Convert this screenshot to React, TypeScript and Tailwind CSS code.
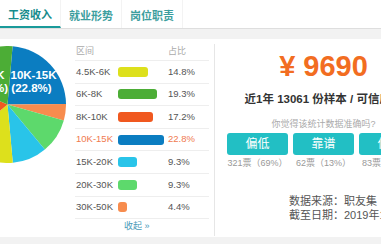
import React from 'react'

interface Row {
  range: string
  pct: number
  color: string
  hot?: boolean
}

const rows: Row[] = [
  { range: '4.5K-6K', pct: 14.8, color: '#dde01c' },
  { range: '6K-8K', pct: 19.3, color: '#4cad36' },
  { range: '8K-10K', pct: 17.2, color: '#f0581f' },
  { range: '10K-15K', pct: 22.8, color: '#0b7dc1', hot: true },
  { range: '15K-20K', pct: 9.3, color: '#29c4e9' },
  { range: '20K-30K', pct: 9.3, color: '#5dd96c' },
  { range: '30K-50K', pct: 4.4, color: '#f78c4e' },
]

// 饼图扇区：中心 (7.5, 58.5)，半径 58.5，页面左侧被裁掉
const slices = [
  { color: '#0b7dc1', d: 'M7.5 58.5 L12.6 0.22 A58.5 58.5 0 0 1 66 57.99 Z' },
  { color: '#f78c4e', d: 'M7.5 58.5 L66 57.99 A58.5 58.5 0 0 1 63.79 74.43 Z' },
  { color: '#5dd96c', d: 'M7.5 58.5 L63.79 74.43 A58.5 58.5 0 0 1 44.87 103.51 Z' },
  { color: '#29c4e9', d: 'M7.5 58.5 L44.87 103.51 A58.5 58.5 0 0 1 12.8 116.76 Z' },
  { color: '#dde01c', d: 'M7.5 58.5 L12.8 116.76 A58.5 58.5 0 0 1 -37.12 96.34 Z' },
  { color: '#f0581f', d: 'M7.5 58.5 L-37.12 96.34 A58.5 58.5 0 0 1 -46.15 35.18 Z' },
  { color: '#4cad36', d: 'M7.5 58.5 L-46.15 35.18 A58.5 58.5 0 0 1 12.6 0.22 Z' },
]

const tabs = ['工资收入', '就业形势', '岗位职责']

const votes = [
  { label: '偏低', count: '321票（69%）' },
  { label: '靠谱', count: '62票（13%）' },
  { label: '偏高', count: '83票（18%）' },
]

function Pie() {
  return (
    <svg width={66} height={117} className="shrink-0 mt-[7px]" style={{ overflow: 'hidden' }}>
      {slices.map((s, i) => (
        <path key={i} d={s.d} fill={s.color} />
      ))}
      <g fill="#fff" fontWeight="bold" fontSize="11.5" fontFamily="'Liberation Sans', sans-serif" textAnchor="middle">
        <text x={33.5} y={33}>10K-15K</text>
        <text x={31.5} y={46}>(22.8%)</text>
        <text x={-12} y={33}>6K-8K</text>
        <text x={-12} y={46}>(19.3%)</text>
      </g>
    </svg>
  )
}

export default function App() {
  return (
    <div
      className="w-[381px] h-[244px] overflow-hidden bg-[#f2f2f2]"
      style={{ fontFamily: "'Liberation Sans', 'Noto Sans CJK SC', sans-serif" }}
    >
      {/* 标签栏 */}
      <div className="flex h-[29px] bg-white border-b border-[#dedede]">
        {tabs.map((t, i) => (
          <div
            key={t}
            className={`w-[61px] shrink-0 flex items-center justify-center pt-1 text-[11px] font-bold border-r border-[#f3f3f3] ${
              i === 0 ? 'text-[#178c8c] border-b-2 border-b-[#1a9a9a]' : 'text-[#3c9e9e]'
            }`}
          >
            {t}
          </div>
        ))}
      </div>

      {/* 内容 */}
      <div className="mt-[10px] flex h-[198px] bg-white">
        <Pie />

        {/* 表格 */}
        <div className="ml-[9px] mt-[5px] w-[134px] shrink-0">
          <div className="flex h-[17px] items-center border-b border-[#eeeeee] text-[9px] text-[#aaaaaa]">
            <span className="w-[93px] pl-px">区间</span>
            <span>占比</span>
          </div>
          {rows.map((r) => (
            <div
              key={r.range}
              className={`flex h-[22.6px] items-center border-b border-[#eeeeee] text-[9.5px] ${
                r.hot ? 'text-[#f07a4f]' : 'text-[#555555]'
              }`}
            >
              <span className="w-[43px] pl-px">{r.range}</span>
              <span className="w-[50px]">
                <span
                  className="block h-[10px] rounded-[3px]"
                  style={{ width: Math.round(r.pct * 2.02), backgroundColor: r.color }}
                />
              </span>
              <span>{r.pct}%</span>
            </div>
          ))}
          <div className="pl-[49px] pt-[1px] text-[9px] text-[#4a9bb8]">收起 »</div>
        </div>

        {/* 右侧 */}
        <div className="ml-[5px] mt-[5px] h-[192px] w-[218px] shrink-0 border-l border-[#e6e6e6] px-3">
          <div className="mt-[8px] text-center text-[29px] leading-none font-bold text-[#f26d21]">¥ 9690</div>
          <div className="mt-[10px] whitespace-nowrap text-center text-[11.5px] leading-4 font-bold text-[#333333]">
            近1年 13061 份样本 / 可信度高
          </div>
          <div className="mt-[11px] text-center text-[9px] leading-3 text-[#aaaaaa]">你觉得该统计数据准确吗?</div>
          <div className="mt-[3px] flex gap-[5px]">
            {votes.map((v) => (
              <div key={v.label} className="w-[61px] shrink-0">
                <div className="flex h-[22px] items-center justify-center rounded-[3px] bg-[#22bfc4] text-[12px] text-white">
                  {v.label}
                </div>
                <div className="mt-[2px] whitespace-nowrap text-center text-[9px] leading-3 text-[#999999]">{v.count}</div>
              </div>
            ))}
          </div>
          <div className="mt-[25px] ml-[62px] whitespace-nowrap text-[11px] leading-[14px] text-[#555555]">
            <div>数据来源：职友集</div>
            <div>截至日期：2019年1月31日</div>
          </div>
        </div>
      </div>
    </div>
  )
}
